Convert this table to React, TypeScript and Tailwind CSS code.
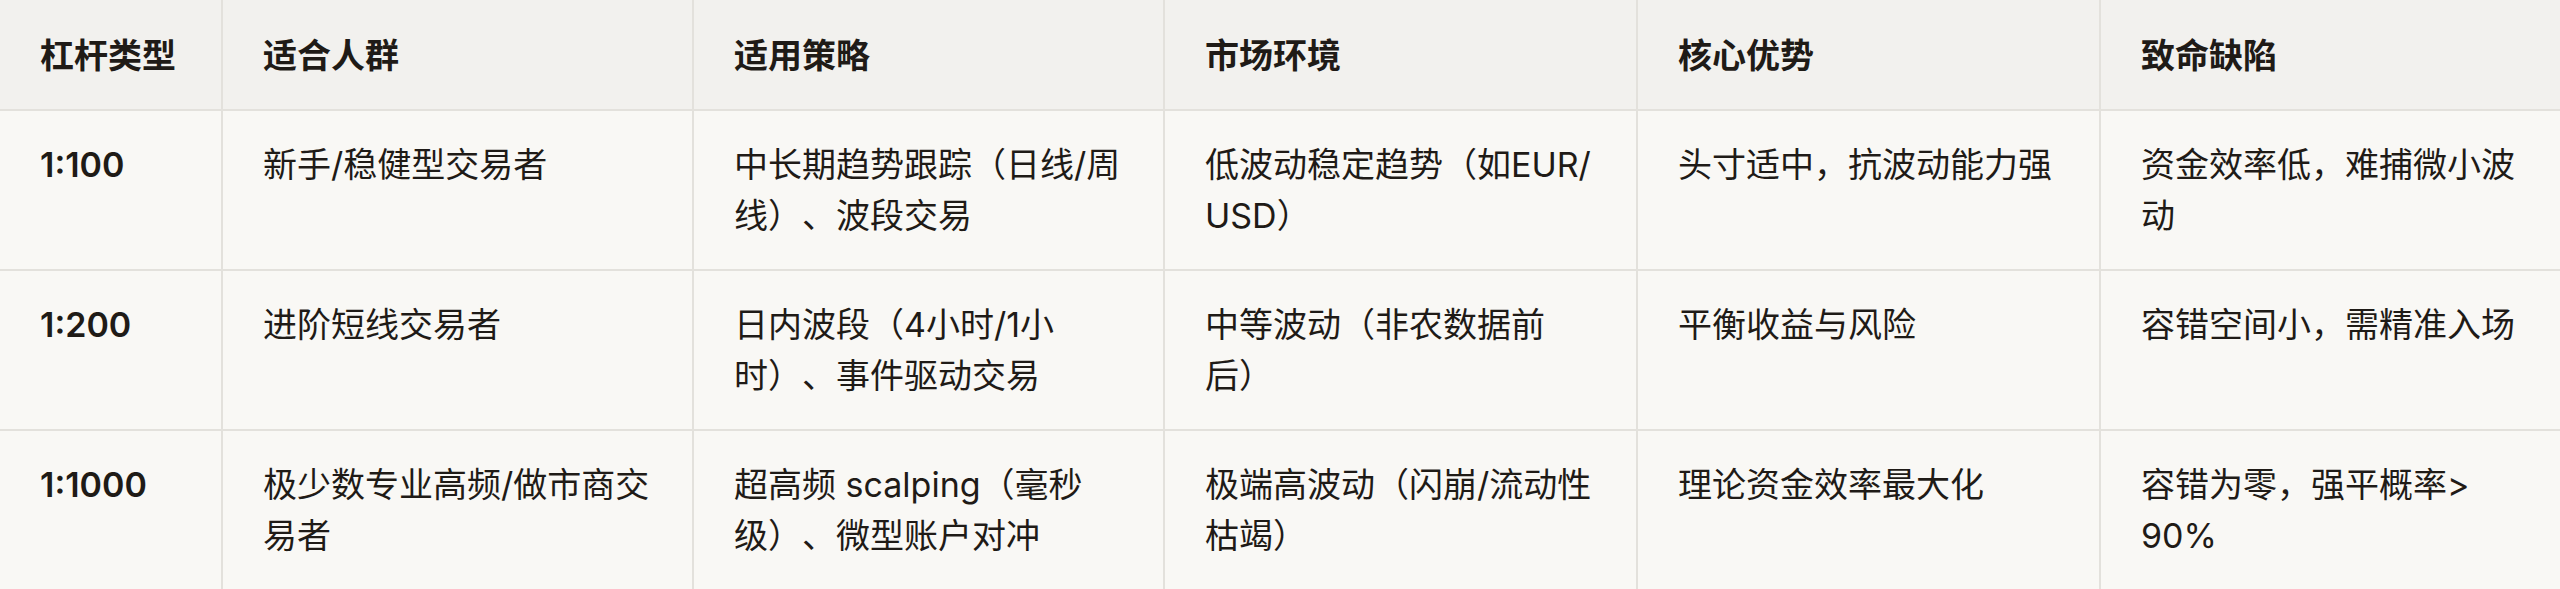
const headers = ["杠杆类型", "适合人群", "适用策略", "市场环境", "核心优势", "致命缺陷"];

// \u200B lets the line break after "EUR/" like the reference does
const rows = [
  ["1:100", "新手/稳健型交易者", "中长期趋势跟踪（日线/周线）、波段交易", "低波动稳定趋势（如EUR/\u200BUSD）", "头寸适中，抗波动能力强", "资金效率低，难捕微小波动"],
  ["1:200", "进阶短线交易者", "日内波段（4小时/1小时）、事件驱动交易", "中等波动（非农数据前后）", "平衡收益与风险", "容错空间小，需精准入场"],
  ["1:1000", "极少数专业高频/做市商交易者", "超高频 scalping（毫秒级）、微型账户对冲", "极端高波动（闪崩/流动性枯竭）", "理论资金效率最大化", "容错为零，强平概率> 90%"],
];

export default function App() {
  return (
    <div
      className="h-[589px] w-[2560px] overflow-hidden bg-[#f9f8f5] text-[#1f1b17] [text-spacing-trim:space-all]"
      style={{ fontFamily: 'Inter, "Noto Sans CJK SC", sans-serif' }}
    >
      <table className="w-[2560px] table-fixed border-collapse text-[34px] leading-[51px]">
        <colgroup>
          <col className="w-[222px]" />
          <col className="w-[471px]" />
          <col className="w-[471px]" />
          <col className="w-[473px]" />
          <col className="w-[463px]" />
          <col className="w-[460px]" />
        </colgroup>
        <thead>
          <tr className="bg-[#f2f1ee]">
            {headers.map((h, i) => (
              <th
                key={h}
                className={`border-b-2 border-[#e3e1dc] px-10 pt-[30px] pb-[28px] text-left align-top font-semibold ${i > 0 ? "border-l-2" : ""}`}
              >
                {h}
              </th>
            ))}
          </tr>
        </thead>
        <tbody>
          {rows.map((r) => (
            <tr key={r[0]}>
              {r.map((c, i) => (
                <td
                  key={i}
                  className={`border-b-2 border-[#e3e1dc] px-10 py-[28px] align-top ${i > 0 ? "border-l-2" : "font-semibold"}`}
                >
                  {c}
                </td>
              ))}
            </tr>
          ))}
        </tbody>
      </table>
    </div>
  );
}
